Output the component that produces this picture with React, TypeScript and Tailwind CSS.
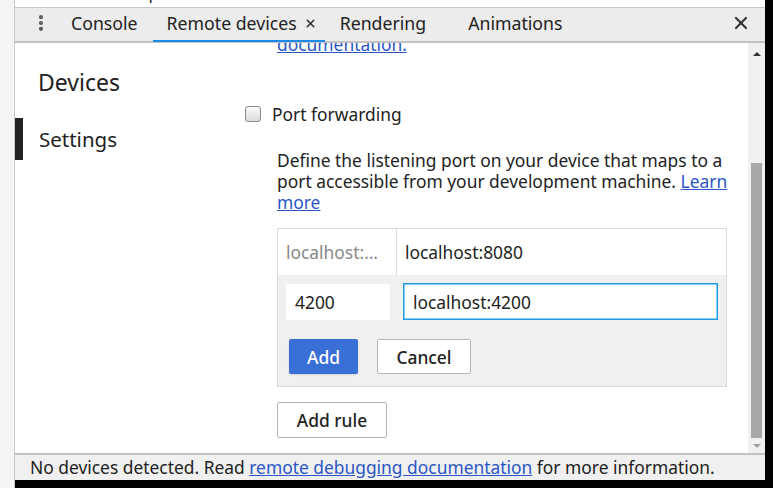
import { MoreVertical, X } from 'lucide-react';

const font = { fontFamily: '"Noto Sans", "DejaVu Sans", sans-serif' };

function Tab({ label, active, closable }: { label: string; active?: boolean; closable?: boolean }) {
  return (
    <div className={'relative flex h-full items-center pb-[3px] ' + (active ? 'pl-[14px] pr-[8px]' : 'px-[15px]')}>
      <span className="text-[17.7px] text-[#222]">{label}</span>
      {closable && <X size={13} strokeWidth={3} className="ml-[7px] text-[#333]" />}
      {active && <div className="absolute bottom-[-1px] left-0 right-0 h-[2px] bg-[#1a8be8]" />}
    </div>
  );
}

export default function App() {
  return (
    <div className="flex h-[488px] w-[773px] overflow-hidden bg-black text-[#222]" style={font}>
      <div className="w-[15px] shrink-0 border-r border-[#c8c8c8] bg-[#f4f4f4]" />
      <div className="flex h-[480px] w-[750px] shrink-0 flex-col bg-white">
        <div className="relative h-[8px] shrink-0 overflow-hidden border-b border-[#c8c8c8] bg-white">
          <span className="absolute left-[42px] top-[-20px] text-[17px]">DOM Breakpoints</span>
        </div>
        <div className="flex h-[35px] shrink-0 items-center border-b-2 border-[#c2c2c2] bg-[#ececec]">
          <div className="flex h-full w-[41px] items-center justify-center pb-[3px] pl-[10px]">
            <MoreVertical size={20} strokeWidth={3} className="text-[#555]" />
          </div>
          <Tab label="Console" />
          <Tab label="Remote devices" active closable />
          <Tab label="Rendering" />
          <div className="w-[12px]" />
          <Tab label="Animations" />
          <div className="flex-1" />
          <X size={20} strokeWidth={2.6} className="mb-[3px] mr-[14px] text-[#333]" />
        </div>
        <div className="flex min-h-0 flex-1">
          <div className="w-[230px] shrink-0 pt-[25px]">
            <div className="pl-[23px] text-[23px] leading-[28px]">Devices</div>
            <div className="mt-[22px] flex h-[42px] items-center">
              <div className="h-full w-[8px] bg-[#222]" />
              <span className="pl-[16px] text-[20.5px]">Settings</span>
            </div>
          </div>
          <div className="relative min-w-0 flex-1 overflow-hidden text-[17.4px]">
            <div className="absolute top-[-12px] left-[32px]">
              <a className="text-[#2a56c6] underline">documentation.</a>
            </div>
            <div className="pt-[58px]">
              <label className="flex items-center gap-[11px]">
                <span className="h-[16px] w-[16px] rounded-[3px] border border-[#8a8a8a] bg-gradient-to-b from-[#fafafa] to-[#dcdcdc]" />
                <span>Port forwarding</span>
              </label>
              <div className="ml-[32px] mr-[21px] mt-[23px]">
                <p className="mr-[-8px] leading-[21px]">
                  Define the listening port on your device that maps to a port accessible from your development machine.{' '}
                  <a className="text-[#2a56c6] underline">Learn more</a>
                </p>
                <div className="mt-[15px] border border-[#dadada]">
                  <div className="flex h-[46px] bg-white">
                    <div className="flex w-[119px] items-center border-r border-[#dadada] pl-[8px] text-[#888]">
                      localhost:…
                    </div>
                    <div className="flex items-center pl-[8px]">localhost:8080</div>
                  </div>
                  <div className="bg-[#f0f0f0] px-[8px] pt-[8px] pb-[12px]">
                    <div className="flex items-center gap-[13px]">
                      <div className="flex h-[36px] w-[104px] items-center bg-white pl-[9px]">4200</div>
                      <div className="flex h-[37px] flex-1 items-center bg-white pl-[10px] ring-[1.5px] ring-inset ring-[#1e9be6]">
                        localhost:4200
                      </div>
                    </div>
                    <div className="mt-[19px] flex gap-[19px] pl-[3px]">
                      <button className="h-[35px] w-[69px] rounded-[2px] bg-[#3b6fd8] font-medium text-white shadow-sm">
                        Add
                      </button>
                      <button className="h-[35px] w-[94px] rounded-[2px] border border-[#b5b5b5] bg-white font-medium">
                        Cancel
                      </button>
                    </div>
                  </div>
                </div>
                <button className="mt-[15px] h-[36px] w-[110px] rounded-[2px] border border-[#b5b5b5] bg-white font-medium">
                  Add rule
                </button>
              </div>
            </div>
          </div>
          <div className="flex w-[17px] shrink-0 flex-col items-center bg-[#f0f0f0]">
            <div className="mt-[9px] h-0 w-0 border-x-[4px] border-b-[4px] border-x-transparent border-b-[#333]" />
            <div className="mt-[107px] h-[275px] w-[11px] bg-[#a8a8a8]" />
            <div className="mt-[6px] h-0 w-0 border-x-[4px] border-t-[4px] border-x-transparent border-t-[#a0a0a0]" />
          </div>
        </div>
        <div className="flex h-[27px] shrink-0 items-center border-t-2 border-[#c2c2c2] bg-[#f0f0f0] pl-[15px] text-[17.4px]">
          No devices detected. Read&nbsp;<a className="text-[#2a56c6] underline">remote debugging documentation</a>&nbsp;for more information.
        </div>
      </div>
    </div>
  );
}
